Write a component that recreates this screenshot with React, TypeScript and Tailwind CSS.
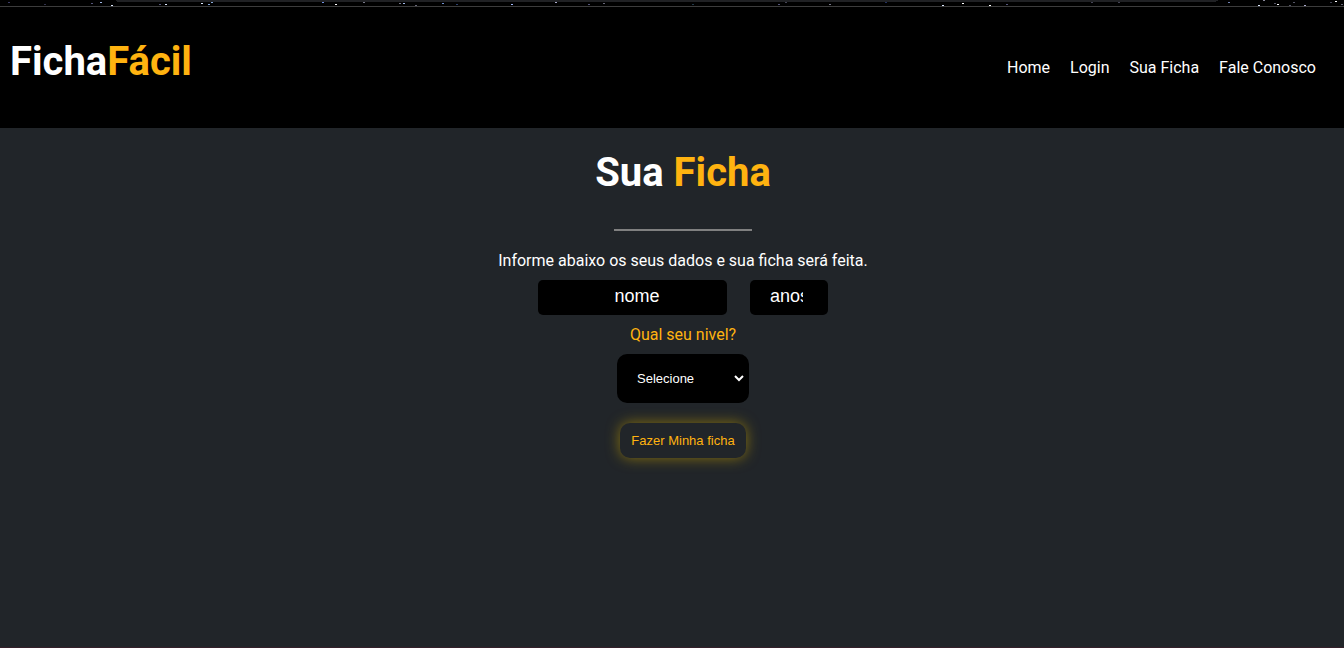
const stars: [number, number, string][] = [
  [8, 2, "#3c3c66"], [44, 4, "#30304a"], [91, 3, "#55557a"], [100, 2, "#a0b8e8"], [111, 5, "#dce8ff"],
  [159, 4, "#55557a"], [165, 4, "#dce8ff"], [201, 3, "#dce8ff"], [208, 4, "#88a8dc"], [211, 2, "#88a8dc"],
  [322, 2, "#6f8fe0"], [335, 4, "#ffffff"], [363, 2, "#778"], [399, 3, "#778"], [403, 3, "#a0b8e8"],
  [415, 5, "#667"], [442, 3, "#6f8fd0"], [456, 4, "#2c406c"], [511, 4, "#a0b8ff"], [555, 2, "#aac"],
  [588, 4, "#55557a"], [603, 3, "#667"], [692, 4, "#203848"], [778, 4, "#55557a"], [785, 2, "#445"],
  [829, 4, "#778"], [885, 2, "#223060"], [942, 5, "#dce8ff"], [962, 3, "#ffffff"], [989, 5, "#ffffff"],
  [1006, 4, "#55557a"],
  [1091, 2, "#445"], [1118, 2, "#445"], [1228, 2, "#6f80b0"], [1258, 5, "#dce8ff"], [1263, 0, "#889"],
  [1274, 3, "#556"], [1277, 4, "#ffffff"], [1289, 5, "#556"], [1293, 2, "#556"], [1304, 5, "#aac"],
  [1330, 2, "#445"], [1335, 1, "#ffffff"], [1341, 4, "#667"],
];

const links = ["Home", "Login", "Sua Ficha", "Fale Conosco"];

export default function App() {
  return (
    <div className="flex min-h-screen flex-col bg-[#212529] font-[Roboto,sans-serif] text-base leading-6 text-white">
      <div className="h-[7px] overflow-hidden border-b border-[#3c3c3c] bg-black">
        <svg className="block h-[6px] w-full" viewBox="0 0 1344 6" preserveAspectRatio="none" shapeRendering="crispEdges" aria-hidden="true">
          <path d="M115 0H1219L1215 2H118Z" fill="#202124" />
          {stars.map(([x, y, color]) => (
            <rect key={x} x={x} y={y} width="2" height="1" fill={color} />
          ))}
        </svg>
      </div>

      <header className="flex h-[121px] items-center justify-between bg-black pr-7 pl-[10px]">
        <div className="pb-3 text-[40px] leading-[48px] font-bold">
          Ficha<span className="text-[#ffb310]">Fácil</span>
        </div>
        <nav className="flex gap-5">
          {links.map((label) => (
            <a key={label} href="#">{label}</a>
          ))}
        </nav>
      </header>

      <main className="flex grow flex-col items-center border-b border-[#35202a] pl-[22px]">
        <h1 className="mt-[21px] text-[40px] leading-[48px] font-bold">
          Sua <span className="text-[#ffb310]">Ficha</span>
        </h1>
        <hr className="mt-8 h-[2px] w-[138px] border-0 bg-[#808080]" />
        <p className="mt-[18px]">Informe abaixo os seus dados e sua ficha será feita.</p>
        <form className="flex flex-col items-center" onSubmit={(e) => e.preventDefault()}>
          <div className="mt-[7px] flex gap-[23px]">
            <input
              type="text"
              aria-label="Nome"
              placeholder="nome"
              className="h-[35px] w-[189px] rounded-[5px] bg-black pr-[15px] pb-[2px] pl-6 text-center font-['Liberation_Sans',sans-serif] text-lg placeholder:text-white"
            />
            <input
              type="text"
              aria-label="Idade"
              placeholder="anos"
              className="h-[35px] w-[78px] rounded-[5px] bg-black pr-[25px] pb-[2px] pl-5 font-['Liberation_Sans',sans-serif] text-lg placeholder:text-white"
            />
          </div>
          <label htmlFor="nivel" className="mt-2 text-[#ffb310]">Qual seu nivel?</label>
          <select
            id="nivel"
            defaultValue=""
            className="mt-[7px] h-[49px] w-[132px] rounded-[10px] border-r-2 border-black bg-black pl-4 font-['Liberation_Sans',sans-serif] text-[13px]"
          >
            <option value="">Selecione</option>
            <option value="iniciante">Iniciante</option>
            <option value="avancado">Avançado</option>
          </select>
          <button
            type="submit"
            className="mt-5 h-[35px] w-[126px] rounded-[10px] font-['Liberation_Sans',sans-serif] text-[13px] whitespace-nowrap text-[#ffb310] shadow-[0_0_14px_#857010]"
          >
            Fazer Minha ficha
          </button>
        </form>
      </main>
    </div>
  );
}
